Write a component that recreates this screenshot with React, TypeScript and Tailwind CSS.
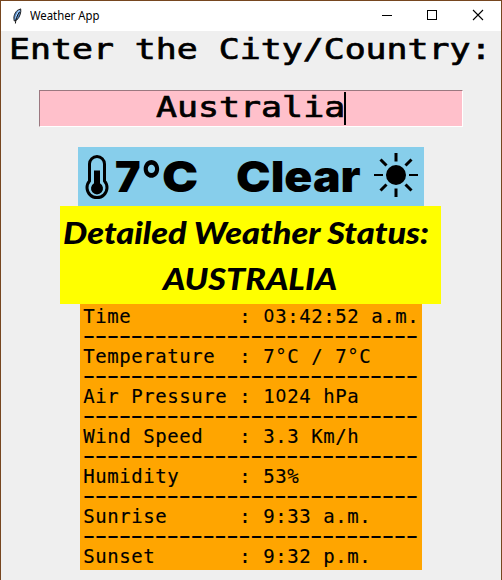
import { useLayoutEffect, useRef, useState, type ReactNode } from "react";

/** Stretches a single line of text horizontally to fill its box. */
function Fit({ className, children }: { className: string; children: ReactNode }) {
  const box = useRef<HTMLDivElement>(null);
  const text = useRef<HTMLSpanElement>(null);
  const [scale, setScale] = useState(1);
  useLayoutEffect(() => {
    if (box.current && text.current) {
      setScale(box.current.clientWidth / text.current.offsetWidth);
    }
  }, []);
  return (
    <div ref={box} className={`shrink-0 ${className}`}>
      <span ref={text} className="inline-block origin-left whitespace-pre" style={{ transform: `scaleX(${scale})` }}>
        {children}
      </span>
    </div>
  );
}

const rows = [
  ["Time", "03:42:52 a.m."],
  ["Temperature", "7°C / 7°C"],
  ["Air Pressure", "1024 hPa"],
  ["Wind Speed", "3.3 Km/h"],
  ["Humidity", "53%"],
  ["Sunrise", "9:33 a.m."],
  ["Sunset", "9:32 p.m."],
];

/** One line of the report on a fixed 12px character grid. */
function Cells({ text }: { text: string }) {
  return (
    <div className="flex h-5">
      {text.split("").map((c, i) => (
        <span
          key={i}
          className={`w-3 text-center whitespace-pre [-webkit-text-stroke:0.15px_black] ${c === "0" ? "scale-x-[0.92] font-['DejaVu_Sans',sans-serif] text-[18.5px]" : ""}`}
        >
          {c}
        </span>
      ))}
    </div>
  );
}

function Feather() {
  return (
    <svg width="12" height="17" viewBox="0 0 12 17" className="shrink-0">
      <path d="M2.300 13C1.200 9.500 2.200 5.500 5.200 2.500L8.700 .9C9.300 4 8 9 4.800 12Z" fill="#4f86c6" stroke="#222" strokeWidth="1" />
      <path d="M7.500 2.300C5.700 4 4.300 7.500 3.600 10.500" fill="none" stroke="#b9dcff" strokeWidth="1.100" />
      <path d="M7.500 4C5 7.500 3.800 11 3.400 15.500" fill="none" stroke="#111" strokeWidth="1" />
    </svg>
  );
}

export default function App() {
  return (
    <div className="flex h-[580px] w-[502px] flex-col items-start overflow-hidden border border-b-0 border-[#76461f] bg-[#efefef] text-black">
      <div className="flex h-[30px] w-full shrink-0 items-center bg-white pl-[11px] font-['Noto_Sans',sans-serif] text-xs">
        <Feather />
        <Fit className="ml-[6px] w-[69px]">Weather App</Fit>
        <div className="grow" />
        <svg width="112" height="16" viewBox="0 0 112 16" className="mb-[2px] shrink-0" fill="none" stroke="black" shapeRendering="crispEdges">
          <path d="M0 8.500H10M45.500 3.500H54.500V12.500H45.500Z" />
          <path d="M91 3L101 13M101 3L91 13" shapeRendering="auto" strokeWidth="1.1" />
        </svg>
        <div className="w-[7px]" />
      </div>

      <Fit className="ml-[8px] h-[36px] w-[483px] font-['DejaVu_Sans_Mono',monospace] text-[29px] leading-[36px] [-webkit-text-stroke:0.7px_black]">
        Enter the City/Country:
      </Fit>

      <div className="mt-[23px] ml-[38px] flex h-[37px] w-[424px] shrink-0 border border-t-[#9b7880] border-r-white border-b-white border-l-[#9b7880] bg-[#ffc0cb] pl-[116px]">
        <Fit className="h-[32px] w-[189px] font-['DejaVu_Sans_Mono',monospace] text-[29px] leading-[32px] [-webkit-text-stroke:0.7px_black]">
          Australia
        </Fit>
        <div className="mt-[1px] -ml-px h-[33px] w-[2px] bg-black" />
      </div>

      <div className="mt-[20px] ml-[77px] flex h-[59px] w-[346px] shrink-0 items-center bg-[#87ceeb] pl-[7px] font-['Inter',sans-serif] text-[43px] leading-[59px] font-black">
        <svg width="24" height="46" viewBox="0 0 24 46" className="mt-[3px] shrink-0">
          <path d="M4.500 26V9A7.500 7.500 0 0 1 19.500 9V26A10 10 0 1 1 4.500 26Z" fill="none" stroke="black" strokeWidth="3" />
          <path d="M9 15.500H15V28.300A6 6 0 1 1 9 28.300Z" />
        </svg>
        <Fit className="ml-[6px] w-[26px]">7</Fit>
        <Fit className="mt-[5px] w-[21px] text-[52px] font-semibold">°</Fit>
        <Fit className="w-[36px]">C</Fit>
        <Fit className="ml-[38px] w-[125px]">Clear</Fit>
        <svg width="44" height="44" viewBox="-22 -22 44 44" className="mb-[3px] ml-[13px] shrink-0" stroke="black" strokeWidth="3">
          <circle r="10" stroke="none" />
          <path d="M0-22V-13.500M0 22V13.500M-15.500-15.500L-9.500-9.500M15.500-15.500L9.500-9.500M-15.500 15.500L-9.500 9.500M15.500 15.500L9.500 9.500" />
          <path d="M-22 0H-13M22 0H13" strokeWidth="2" />
        </svg>
      </div>

      <div className="ml-[59px] h-[98px] w-[381px] shrink-0 bg-[#ffff00] pt-[3px] font-['Lato',sans-serif] text-[31px] leading-[46px] font-black italic">
        <Fit className="ml-[3px] h-[46px] w-[366px]">Detailed Weather Status:</Fit>
        <Fit className="ml-[103px] h-[46px] w-[174px]">AUSTRALIA</Fit>
      </div>

      <div className="ml-[79px] h-[266px] w-[342px] shrink-0 bg-[#ffa500] pt-[2px] pl-[3px] font-['DejaVu_Sans_Mono',monospace] text-[19px] leading-5">
        {rows.map(([name, value], i) => (
          <div key={name}>
            {i > 0 && (
              <Fit className="h-5 w-[336px] font-['Liberation_Sans',sans-serif] text-[17px] leading-[19px] font-bold">
                {"-".repeat(28)}
              </Fit>
            )}
            <Cells text={name.padEnd(13) + ": " + value} />
          </div>
        ))}
      </div>
    </div>
  );
}
